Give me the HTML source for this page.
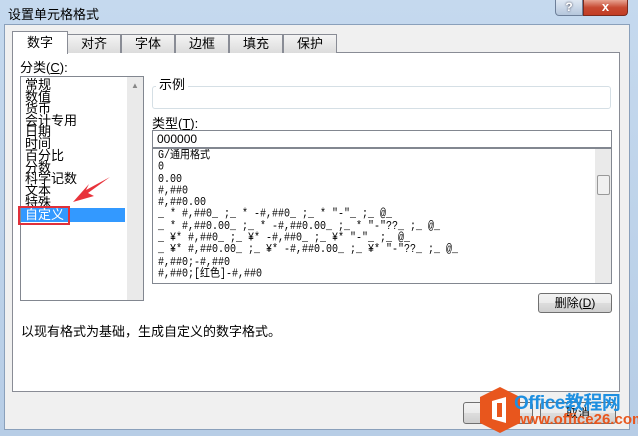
<!DOCTYPE html>
<html><head><meta charset="utf-8"><style>
*{margin:0;padding:0;box-sizing:border-box}
body{width:638px;height:436px;overflow:hidden;position:relative;background:linear-gradient(#c5d9ee,#b7cde6);font-family:"Liberation Sans","Noto Sans CJK SC","WenQuanYi Zen Hei",sans-serif;font-size:12px;color:#000}
.a{position:absolute}
.title{left:8px;top:4px;font-size:13px;color:#000}
.body{left:4px;top:24px;width:626px;height:406px;background:#f0f0f0;border:1px solid #8aa0bb}
.panel{left:12px;top:52px;width:608px;height:340px;background:#fff;border:1px solid #898c95}
.tab{top:34px;height:19px;width:54px;background:linear-gradient(#f4f4f4,#dcdcdc);border:1px solid #898c95;border-bottom:none;text-align:center;font-size:13px;line-height:18px}
.box{background:#fff;border:1px solid #828790}
.sb{background:#eaeaea}
.item{position:absolute;left:4px;font-size:13px;line-height:12px;white-space:nowrap}
.fmt{font-family:"Liberation Mono","Noto Sans CJK SC",monospace;font-size:10px;line-height:11.8px;white-space:pre;left:5px;top:2px;transform:scaleY(1.15);transform-origin:0 0}
.btn{border:1px solid #707070;border-radius:3px;background:linear-gradient(#f2f2f2,#ebebeb 50%,#dddddd 51%,#cfcfcf);text-align:center;font-size:12px;line-height:18px}
</style></head><body>
<div class="a title">设置单元格格式</div>
<div class="a" style="left:555px;top:0;width:28px;height:16px;border:1px solid #6d7f99;border-top:none;border-radius:0 0 0 4px;background:linear-gradient(#dfe8f3,#b5c6dc);color:#fff;font-weight:bold;text-align:center;line-height:14px;font-size:12px;text-shadow:0 0 2px #334">?</div>
<div class="a" style="left:583px;top:0;width:45px;height:16px;border:1px solid #7a2a1e;border-top:none;border-radius:0 0 4px 0;background:linear-gradient(#e8a493,#c74a32 50%,#c23c24);color:#fff;font-weight:bold;text-align:center;line-height:14px;font-size:13px">x</div>
<div class="a body"></div>
<div class="a panel"></div>
<div class="a tab" style="left:67px">对齐</div>
<div class="a tab" style="left:121px">字体</div>
<div class="a tab" style="left:175px">边框</div>
<div class="a tab" style="left:229px">填充</div>
<div class="a tab" style="left:283px">保护</div>
<div class="a tab" style="left:12px;top:31px;height:23px;width:56px;background:#fff;line-height:22px">数字</div>
<div class="a" style="left:20px;top:57px;font-size:13px">分类(<u>C</u>):</div>
<div class="a box" style="left:20px;top:76px;width:124px;height:225px;overflow:hidden">
<div class="a sb" style="left:106px;top:0;width:17px;height:223px"></div>
<div class="a" style="left:110px;top:4px;color:#888;font-size:8px">▲</div>
<div class="a" style="left:0;top:131px;width:104px;height:14px;background:#3399ff"></div>
<div class="item" style="top:2px">常规</div>
<div class="item" style="top:14px">数值</div>
<div class="item" style="top:26px">货币</div>
<div class="item" style="top:38px">会计专用</div>
<div class="item" style="top:49px">日期</div>
<div class="item" style="top:61px">时间</div>
<div class="item" style="top:73px">百分比</div>
<div class="item" style="top:85px">分数</div>
<div class="item" style="top:96px">科学记数</div>
<div class="item" style="top:108px">文本</div>
<div class="item" style="top:120px">特殊</div>
<div class="item" style="top:132px;color:#fff">自定义</div>
</div>
<div class="a" style="left:18px;top:206px;width:52px;height:19px;border:2px solid #e0303a"></div>
<svg class="a" style="left:0;top:0" width="638" height="436"><path d="M110 177 L86 190 L89 184 L73 202 L94 196 L88 193 Z" fill="#e8333b"/></svg>
<div class="a" style="left:152px;top:86px;width:459px;height:23px;border:1px solid #d5dfe5;border-radius:3px"></div>
<div class="a" style="left:156px;top:74px;background:#fff;padding:0 3px;font-size:13px">示例</div>
<div class="a" style="left:152px;top:113px;font-size:13px">类型(<u>T</u>):</div>
<div class="a box" style="left:152px;top:130px;width:460px;height:18px;padding-left:4px;line-height:16px;font-size:12px">000000</div>
<div class="a box" style="left:152px;top:148px;width:460px;height:136px;overflow:hidden">
<div class="a sb" style="left:442px;top:0;width:17px;height:134px"></div>
<div class="a" style="left:444px;top:26px;width:13px;height:20px;border:1px solid #999;border-radius:2px;background:#f0f0f0"></div>
<div class="a fmt" style="line-height:10.3px">G/通用格式
0
0.00
#,##0
#,##0.00
_ * #,##0_ ;_ * -#,##0_ ;_ * "-"_ ;_ @_
_ * #,##0.00_ ;_ * -#,##0.00_ ;_ * "-"??_ ;_ @_
_ ¥* #,##0_ ;_ ¥* -#,##0_ ;_ ¥* "-"_ ;_ @_
_ ¥* #,##0.00_ ;_ ¥* -#,##0.00_ ;_ ¥* "-"??_ ;_ @_
#,##0;-#,##0
#,##0;[红色]-#,##0</div>
</div>
<div class="a btn" style="left:538px;top:293px;width:74px;height:20px">删除(<u>D</u>)</div>
<div class="a" style="left:21px;top:321px;font-size:13px">以现有格式为基础，生成自定义的数字格式。</div>
<div class="a btn" style="left:463px;top:402px;width:70px;height:22px"></div>
<div class="a btn" style="left:540px;top:402px;width:76px;height:22px;line-height:20px">取消</div>
<svg class="a" style="left:470px;top:385px" width="60" height="50"><polygon points="30,2 50,12 50,38 30,48 10,38 10,12" fill="#e8561d"/><path d="M22 16 L36 12 L36 38 L22 34 Z" fill="#fff"/><rect x="27" y="18" width="5" height="14" fill="#e8561d"/></svg>
<div class="a" style="left:514px;top:388px;font-size:19px;font-weight:bold;color:#1e8fe0;white-space:nowrap;letter-spacing:-0.5px">Office教程网</div>
<div class="a" style="left:515px;top:411px;font-size:15px;font-weight:bold;color:#e8561d;white-space:nowrap">www.office26.com</div>
</body></html>
